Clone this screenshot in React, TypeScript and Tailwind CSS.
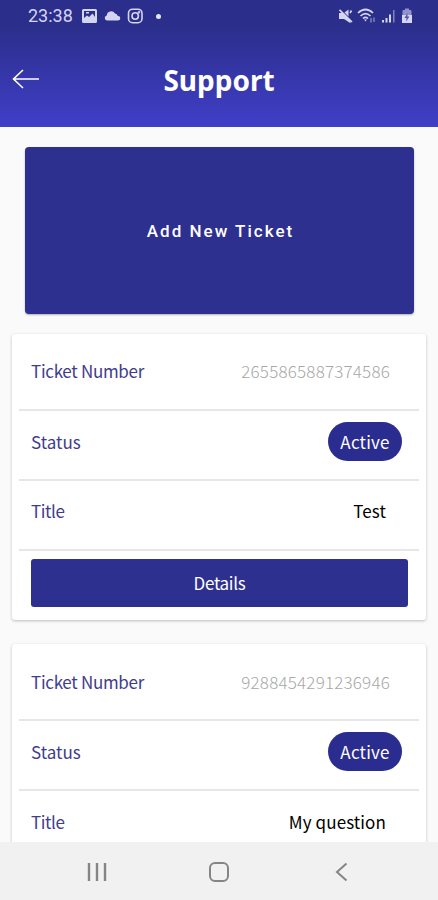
const tickets = [
  { number: '2655865887374586', status: 'Active', title: 'Test' },
  { number: '9288454291236946', status: 'Active', title: 'My question' },
];

function StatusBar() {
  return (
    <div className="flex h-8 items-center justify-between pl-7 pr-[25px] text-[#d3d5f3]">
      <div className="flex items-center">
        <span className="w-[46px] font-[Roboto] text-[18px] leading-none">23:38</span>
        <svg className="ml-[7px]" width="17" height="16" viewBox="0 0 17 16">
          <path fill="currentColor" fillRule="evenodd" d="M2.5 1h12A1.5 1.5 0 0 1 16 2.5v11a1.5 1.5 0 0 1-1.5 1.5h-12A1.5 1.5 0 0 1 1 13.5v-11A1.5 1.5 0 0 1 2.5 1zM3 3v7l3-2.5 2 1.5 3.5-3.5L14 9V3zM5 4h3v1.5H5z" />
        </svg>
        <svg className="ml-[6px]" width="17" height="16" viewBox="0 0 17 16">
          <path fill="currentColor" d="M3 12.5a2.6 2.6 0 0 1-.3-5.1A4.5 4.5 0 0 1 11 5.5a3.2 3.2 0 0 1 2.8 2.4 2.3 2.3 0 0 1 .4 4.6z" />
        </svg>
        <svg className="ml-[6px]" width="17" height="16" viewBox="0 0 17 16" fill="none" stroke="currentColor" strokeWidth="1.6">
          <rect x="1.5" y="1.2" width="13.5" height="13.5" rx="4" />
          <circle cx="8.2" cy="8" r="3.2" />
          <circle cx="12" cy="4.3" r="0.5" />
        </svg>
        <span className="ml-[12px] size-[5px] rounded-full bg-[#e4e5fa]" />
      </div>
      <div className="flex items-center">
        <svg width="16" height="16" viewBox="0 0 16 16">
          <path fill="currentColor" d="M1 5h4.5l7 7.5v2.7L6 11H1zM6.5 4.5 10.500 1.5v7z" />
          <path stroke="currentColor" strokeWidth="1.7" d="M1.5 1.8l12.500 12.2M12 5l1.500-2.5" />
        </svg>
        <svg className="ml-[3px]" width="20" height="16" viewBox="0 0 20 16" fill="none" stroke="currentColor" strokeWidth="1.7">
          <path d="M1 5q7.5-7 15 0M3.5 8q5-4.8 10 0M6 10.5q2.5-2.4 5 0" />
          <path fill="currentColor" stroke="none" d="M7 11.5h3L8.5 13.5z" />
          <path strokeWidth="1.5" opacity="0.5" d="M14 10v4.5M17 9.500v4.5" />
        </svg>
        <svg className="ml-[4px]" width="15" height="16" viewBox="0 0 15 16" fill="currentColor">
          <path d="M1 12h2v2.500H1zM4.500 10h2v4.500h-2zM8 6.500h2v8H8z" />
          <path opacity="0.5" d="M12 2h1.500v12.500H12z" />
        </svg>
        <svg className="ml-[5px]" width="12" height="16" viewBox="0 0 12 16">
          <path fill="currentColor" opacity="0.6" d="M4 .5h4V2h1.500q1 0 1 1v5h-9V3q0-1 1-1H4z" />
          <path fill="currentColor" d="M1 7h10v8H1z" />
          <path fill="#55589f" d="M6.5 5 3.5 10h2l-.5 3.5 3.5-5h-2z" />
        </svg>
      </div>
    </div>
  );
}

function Header() {
  return (
    <header className="h-[126.5px] shrink-0 bg-linear-to-b from-[#2c2e8b] from-20% to-[#403fc8]">
      <StatusBar />
      <div className="grid h-[93px] grid-cols-[50px_1fr_50px] items-center">
        <svg className="ml-3" width="28" height="20" viewBox="0 0 28 20" fill="none" stroke="white" strokeWidth="1.6">
          <path d="M27 10H1.5M11 1 1.5 10l9.5 9" />
        </svg>
        <h1 className="mt-[2px] text-center font-['Noto_Sans'] text-[28px] leading-none font-bold text-white">Support</h1>
      </div>
    </header>
  );
}

function TicketCard({ ticket }: { ticket: (typeof tickets)[number] }) {
  return (
    <div className="mx-3 mb-[24.5px] h-[286px] shrink-0 rounded-[3px] bg-white px-[7px] pt-[7px] text-[17px] leading-none shadow-[0_1px_3px_rgba(0,0,0,0.25)]">
      <div className="flex h-[70px] items-center justify-between border-b-2 border-[#e6e6e6] pr-[29px] pb-[8px] pl-3">
        <span className="tracking-[-0.3px] text-[#3f3d8c]">Ticket Number</span>
        <span className="font-light tracking-[0.2px] text-[#a8a8a8]">{ticket.number}</span>
      </div>
      <div className="flex h-[70px] items-center justify-between border-b-2 border-[#e6e6e6] pr-[17px] pb-[7px] pl-3">
        <span className="text-[#3f3d8c]">Status</span>
        <span className="flex h-[39px] w-[74px] items-center justify-center rounded-full bg-[#2b2c8f] tracking-[0.2px] text-white">{ticket.status}</span>
      </div>
      <div className="flex h-[70px] items-center justify-between border-b-2 border-[#e6e6e6] pr-[33px] pb-[8px] pl-3">
        <span className="tracking-[-0.4px] text-[#3f3d8c]">Title</span>
        <span className="tracking-[0.1px] text-black">{ticket.title}</span>
      </div>
      <button className="mt-[8px] ml-3 flex h-12 w-[377px] items-center justify-center rounded-[3px] bg-[#2e3090] tracking-[-0.3px] text-white">Details</button>
    </div>
  );
}

function NavBar() {
  return (
    <nav className="grid h-[58px] shrink-0 grid-cols-3 items-center bg-[#f1f1f1] px-9 pt-[2px] text-[#858585]">
      <svg className="mx-auto" width="20" height="20" viewBox="0 0 20 20" stroke="currentColor" strokeWidth="2.4">
        <path d="M2 1v18M10 1v18M18 1v18" />
      </svg>
      <svg className="mx-auto" width="20" height="20" viewBox="0 0 20 20" fill="none" stroke="currentColor" strokeWidth="2">
        <rect x="1" y="1" width="18" height="18" rx="5" />
      </svg>
      <svg className="mx-auto" width="20" height="20" viewBox="0 0 20 20" fill="none" stroke="currentColor" strokeWidth="2">
        <path d="M15.5 1.5 6 10l9.500 8.5" />
      </svg>
    </nav>
  );
}

function App() {
  return (
    <div className="flex h-screen w-full flex-col overflow-hidden bg-[#fafafa] font-['Noto_Sans_CJK_SC',sans-serif]">
      <Header />
      <main className="flex min-h-0 flex-1 flex-col overflow-y-auto pt-[20.5px] [scrollbar-width:none]">
        <button className="mx-[25px] mb-[19.5px] flex h-[167px] w-[389px] shrink-0 items-center justify-center rounded-[4px] bg-[#2e3090] pt-[2px] pl-[2px] font-[Roboto] text-[17px] font-medium tracking-[2px] text-white shadow-[0_1px_2px_rgba(0,0,0,0.3)]">
          Add New Ticket
        </button>
        {tickets.map((ticket) => (
          <TicketCard key={ticket.number} ticket={ticket} />
        ))}
      </main>
      <NavBar />
    </div>
  );
}

export default App;
